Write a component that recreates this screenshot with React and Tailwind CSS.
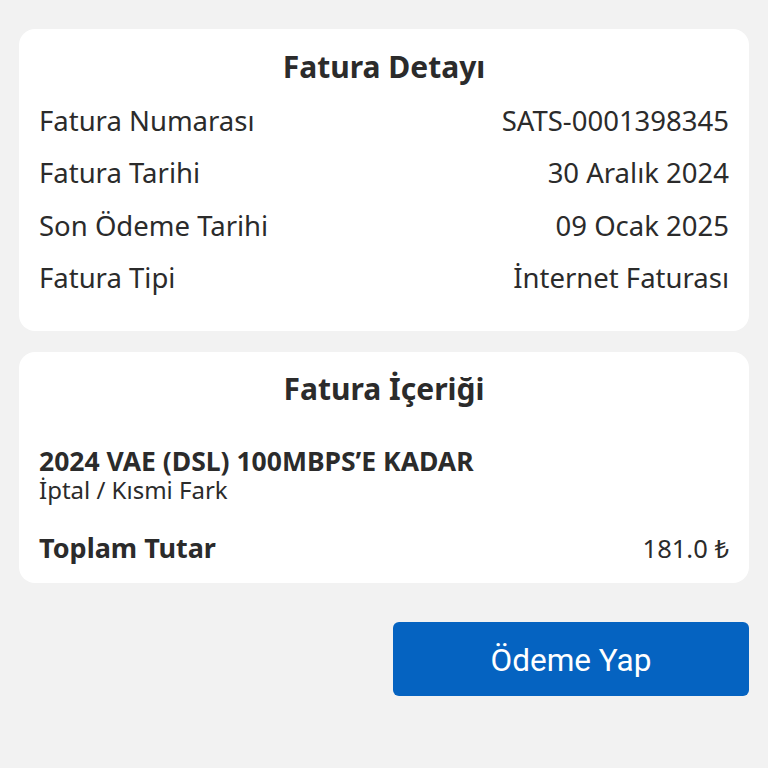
export default function App() {
  const rows = [
    ["Fatura Numarası", "SATS-0001398345"],
    ["Fatura Tarihi", "30 Aralık 2024"],
    ["Son Ödeme Tarihi", "09 Ocak 2025"],
    ["Fatura Tipi", "İnternet Faturası"],
  ];
  return (
    <main className="w-full min-h-screen bg-[#f2f2f2] px-[19px] pt-[29px] text-[#2b2b2b] font-['Noto_Sans',sans-serif]">
      <div className="bg-white rounded-[16px] px-[20px] pt-[20px] pb-[27px]">
        <h1 className="text-center text-[30px] font-bold leading-[36px]">Fatura Detayı</h1>
        <div className="flex flex-col mt-[9px]">
          {rows.map(([k, v]) => (
            <div key={k} className="flex justify-between items-center h-[52.6px] text-[27.5px]">
              <span>{k}</span>
              <span>{v}</span>
            </div>
          ))}
        </div>
      </div>
      <div className="bg-white rounded-[16px] px-[20px] pt-[19px] pb-[15px] mt-[21px]">
        <h1 className="text-center text-[30px] font-bold leading-[36px]">Fatura İçeriği</h1>
        <div className="mt-[39px]">
          <p className="text-[26.5px] font-bold leading-[30px]">2024 VAE (DSL) 100MBPS’E KADAR</p>
          <p className="text-[24px] leading-[28px]">İptal / Kısmi Fark</p>
        </div>
        <div className="flex justify-between items-center mt-[24px] h-[40px]">
          <span className="text-[27px] font-bold">Toplam Tutar</span>
          <span className="text-[25.5px]">181.0 ₺</span>
        </div>
      </div>
      <div className="flex justify-end mt-[39px]">
        <button className="w-[356px] h-[74px] pb-[1px] bg-[#0563c1] rounded-[6px] text-white text-[31.5px] font-['Roboto',sans-serif] flex items-center justify-center pt-[4px]">Ödeme Yap</button>
      </div>
    </main>
  );
}
